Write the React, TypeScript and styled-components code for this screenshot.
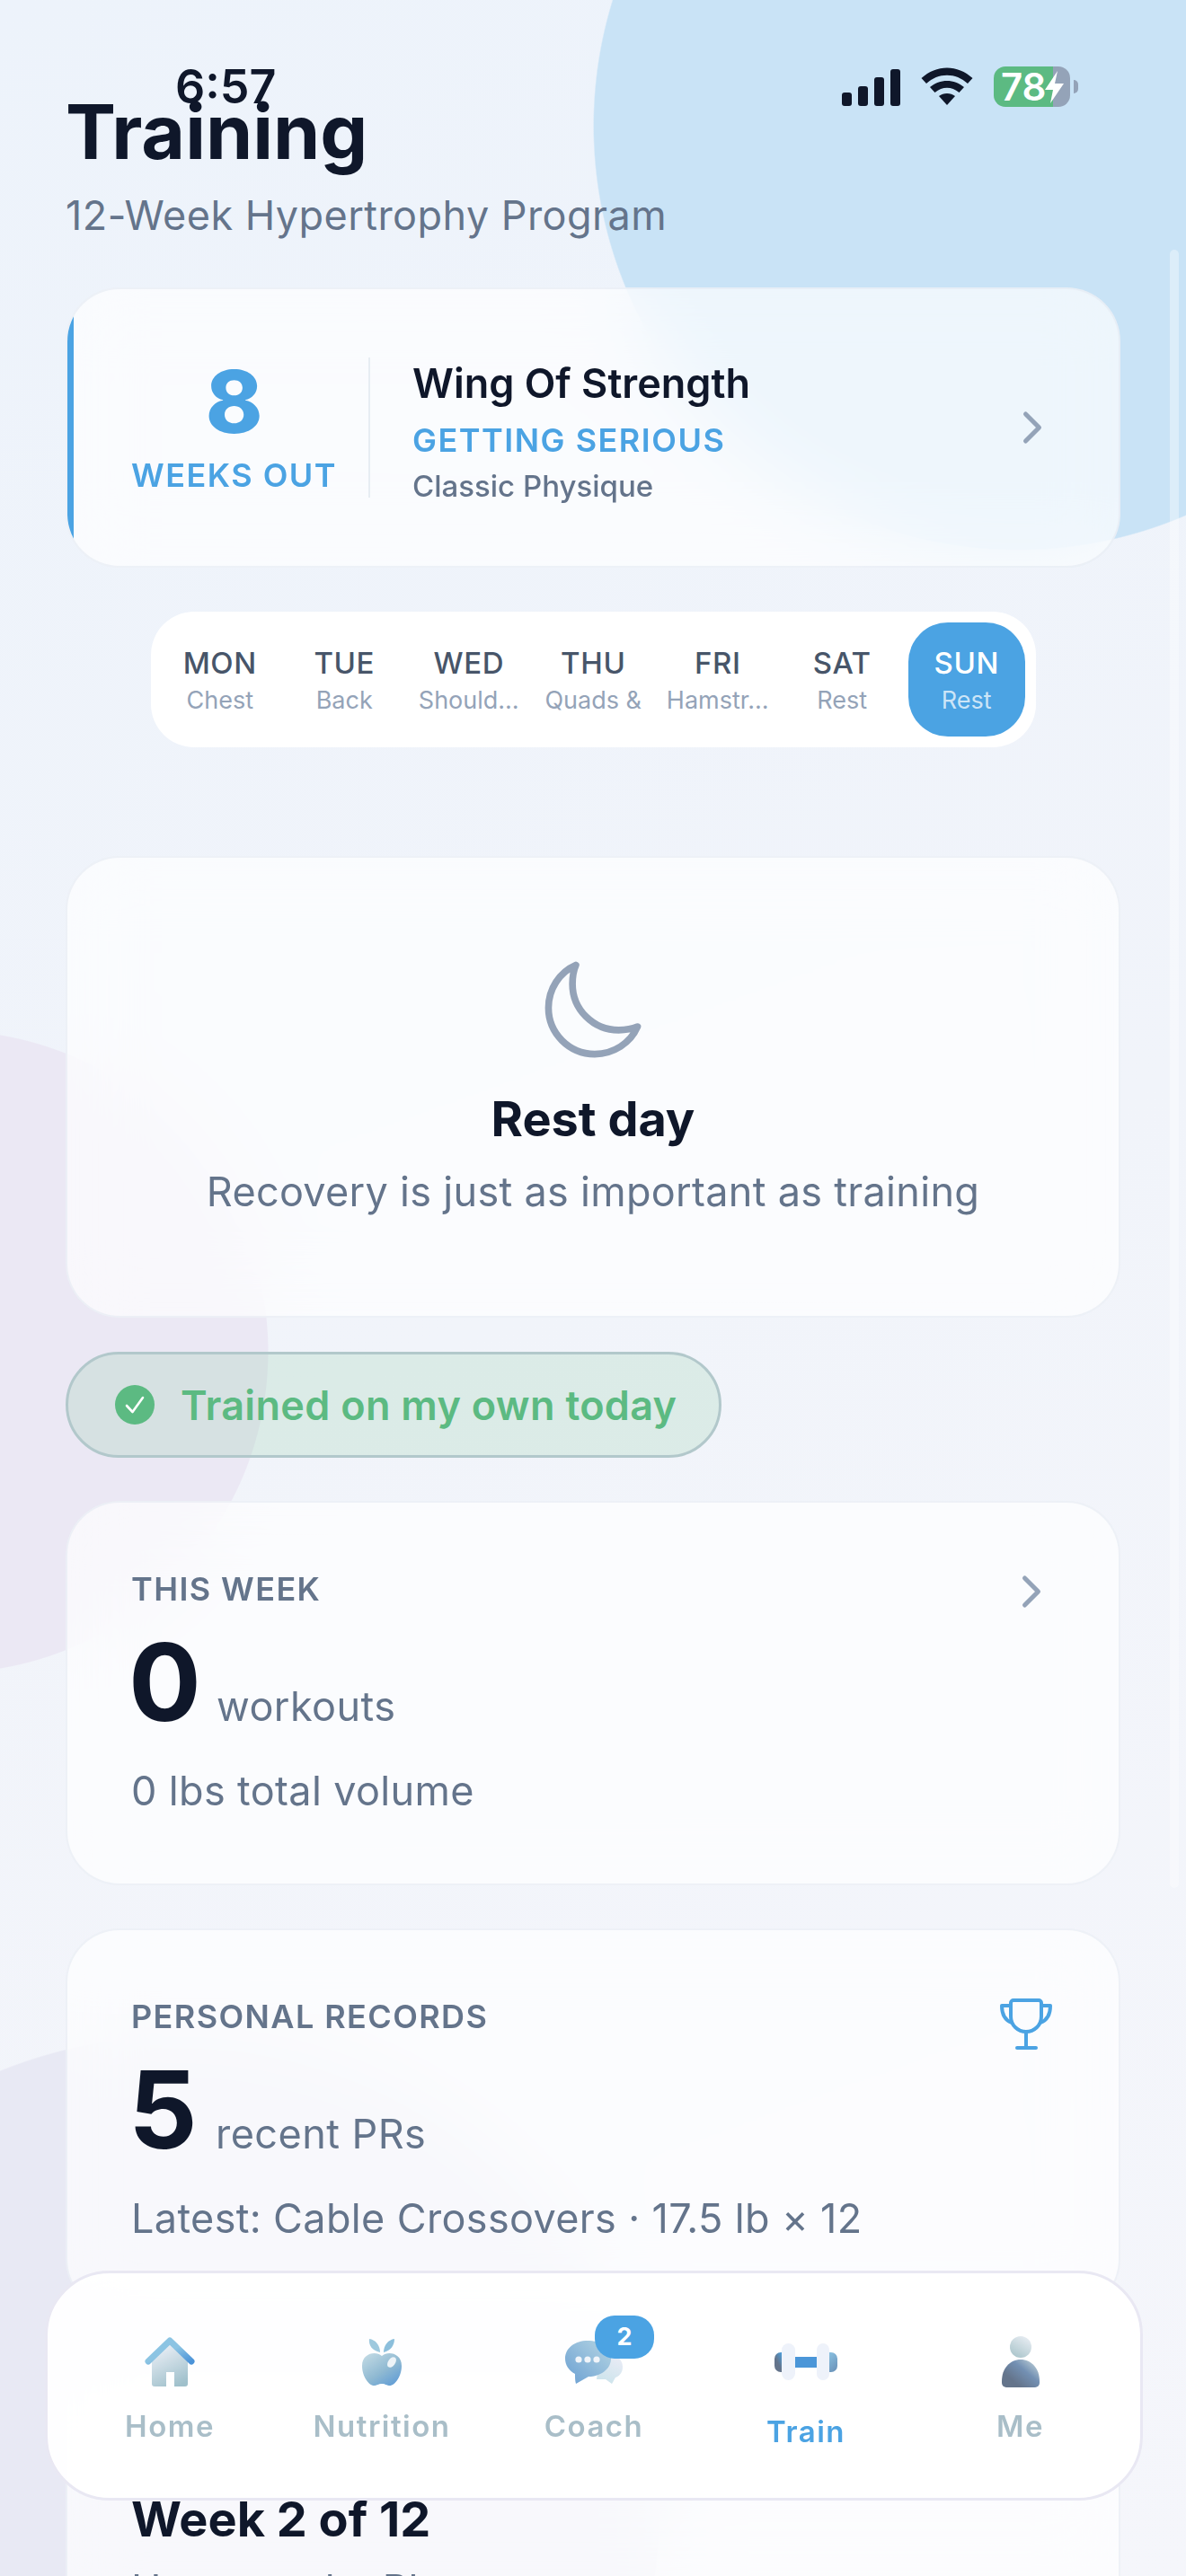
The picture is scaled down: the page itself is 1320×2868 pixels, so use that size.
import React from "react";
import styled, { createGlobalStyle } from "styled-components";
import { ChevronRight } from "lucide-react";
import { IoMoonOutline } from "react-icons/io5";

const GlobalStyle = createGlobalStyle`
  html, body {
    margin: 0;
    padding: 0;
    background: #f1f4fa;
  }
  * {
    box-sizing: border-box;
  }
`;

const Page = styled.div`
  position: relative;
  width: 1320px;
  height: 2868px;
  overflow: hidden;
  padding: 0 73px;
  font-family: Inter, "Liberation Sans", sans-serif;
  color: #0f172a;
  background:
    radial-gradient(circle 473px at 1133px 140px, #c9e3f6 99.7%, transparent 100%),
    radial-gradient(circle 358px at -59px 1505px, #ebe8f4 99.7%, transparent 100%),
    radial-gradient(circle 534px at 200px 2800px, #e8e9f4 99.7%, transparent 100%),
    linear-gradient(160deg, #edf3fb 0%, #f1f4fa 50%, #f5f6fb 100%);
`;

const StatusBar = styled.div`
  position: absolute;
  top: 0;
  left: 0;
  right: 0;
  height: 130px;
  z-index: 3;
`;

const Time = styled.div`
  position: absolute;
  left: 195px;
  top: 67px;
  font-size: 52px;
  font-weight: 600;
  line-height: 60px;
`;

const StatusIcons = styled.div`
  position: absolute;
  left: 937px;
  top: 74px;
  display: flex;
  align-items: center;
  gap: 23px;
`;

const Signal = styled.div`
  display: flex;
  align-items: flex-end;
  gap: 7px;
  height: 43px;
`;

const SignalBar = styled.span<{ $h: number }>`
  display: block;
  width: 11px;
  height: ${(p) => p.$h}px;
  border-radius: 3px;
  background: #0f172a;
`;

const Battery = styled.div`
  position: relative;
  width: 85px;
  height: 45px;
  border-radius: 13px;
  background: linear-gradient(90deg, #5cba82 0 78%, #94a3b8 78% 100%);
  color: #fff;
  display: flex;
  align-items: center;
  padding-left: 8px;
  font-size: 42px;
  font-weight: 600;
  line-height: 45px;
  &::after {
    content: "";
    position: absolute;
    right: -9px;
    top: 15px;
    width: 5px;
    height: 15px;
    border-radius: 0 5px 5px 0;
    background: #94a3b8;
  }
`;

const Bolt = styled.svg`
  margin-left: -2px;
`;

const Scrollbar = styled.div`
  position: absolute;
  left: 1302px;
  top: 278px;
  width: 10px;
  height: 1824px;
  border-radius: 5px;
  background: rgba(255, 255, 255, 0.35);
`;

const Header = styled.header`
  padding-top: 96px;
`;

const Title = styled.h1`
  margin: 0;
  font-size: 84px;
  font-weight: 700;
  line-height: 102px;
`;

const Subtitle = styled.p`
  margin: 15px 0 0;
  font-size: 45px;
  line-height: 54px;
  letter-spacing: 0.45px;
  color: #64748b;
`;

const Card = styled.section`
  border-radius: 60px;
  border: 2px solid rgba(226, 232, 240, 0.55);
  background: rgba(255, 255, 255, 0.68);
  backdrop-filter: blur(40px);
`;

const HeroCard = styled(Card)`
  position: relative;
  overflow: hidden;
  margin-top: 53px;
  height: 312px;
  display: flex;
  align-items: center;
  &::before {
    content: "";
    position: absolute;
    left: -2px;
    top: -2px;
    bottom: -2px;
    width: 9px;
    background: #4ba3e3;
  }
`;

const Countdown = styled.div`
  width: 337px;
  height: 156px;
  padding-left: 36px;
  padding-top: 4px;
  display: flex;
  flex-direction: column;
  align-items: center;
  justify-content: center;
  border-right: 2px solid rgba(226, 232, 240, 0.8);
`;

const CountValue = styled.div`
  font-size: 96px;
  font-weight: 800;
  line-height: 96px;
  color: #4ba3e3;
  margin-top: -6px;
`;

const CountLabel = styled.div`
  font-size: 36px;
  font-weight: 600;
  line-height: 44px;
  letter-spacing: 1.5px;
  color: #4ba3e3;
  margin-top: 12px;
`;

const HeroText = styled.div`
  flex: 1;
  padding: 6px 0 0 47px;
`;

const HeroName = styled.div`
  font-size: 45px;
  font-weight: 600;
  line-height: 58px;
`;

const HeroPhase = styled.div`
  font-size: 36px;
  font-weight: 600;
  line-height: 44px;
  letter-spacing: 1.5px;
  color: #4ba3e3;
  margin-top: 12px;
`;

const HeroSport = styled.div`
  font-size: 33px;
  font-weight: 500;
  line-height: 40px;
  color: #64748b;
  margin-top: 9px;
`;

const Chevron = styled(ChevronRight)`
  color: #94a3b8;
  flex: none;
`;

const HeroChevron = styled(Chevron)`
  margin-right: 66px;
`;

const StatChevron = styled(Chevron)`
  margin: 6px -4px 0 0;
`;

const WeekStrip = styled.nav`
  width: 985px;
  height: 151px;
  margin: 49px auto 0;
  padding: 12px;
  display: grid;
  grid-template-columns: repeat(7, 130.5px);
  gap: 8px;
  border-radius: 48px;
  background: #fff;
`;

const Day = styled.div<{ $active?: boolean }>`
  display: flex;
  flex-direction: column;
  align-items: center;
  justify-content: center;
  border-radius: 44px;
  background: ${(p) => (p.$active ? "#4ba3e3" : "transparent")};
`;

const DayName = styled.span<{ $active?: boolean }>`
  font-size: 33px;
  font-weight: 500;
  line-height: 42px;
  letter-spacing: 0.6px;
  color: ${(p) => (p.$active ? "#fff" : "#475569")};
`;

const DayFocus = styled.span<{ $active?: boolean }>`
  margin-top: 4px;
  font-size: 27px;
  line-height: 34px;
  white-space: nowrap;
  color: ${(p) => (p.$active ? "rgba(255,255,255,.72)" : "#94a3b8")};
`;

const RestCard = styled(Card)`
  margin-top: 121px;
  height: 514px;
  display: flex;
  flex-direction: column;
  align-items: center;
  padding-top: 108px;
`;

const RestTitle = styled.h2`
  margin: 28px 0 0;
  font-size: 54px;
  font-weight: 700;
  line-height: 66px;
`;

const RestText = styled.p`
  margin: 21px 0 0;
  font-size: 45px;
  line-height: 54px;
  letter-spacing: 0.3px;
  color: #64748b;
`;

const TrainedPill = styled.div`
  margin-top: 38px;
  width: 730px;
  height: 118px;
  padding-left: 52px;
  display: flex;
  align-items: center;
  gap: 29px;
  border-radius: 59px;
  border: 3px solid #b2c8cb;
  background: rgba(92, 186, 130, 0.15);
  font-size: 45px;
  font-weight: 600;
  letter-spacing: 0.3px;
  color: #5cba82;
`;

const StatCard = styled(Card)`
  height: 428px;
  margin-top: 48px;
  padding: 74px 71px 0;
`;

const StatTop = styled.div`
  display: flex;
  align-items: center;
  justify-content: space-between;
  height: 44px;
`;

const StatLabel = styled.span`
  font-size: 36px;
  font-weight: 600;
  line-height: 44px;
  letter-spacing: 1.4px;
  color: #64748b;
`;

const StatRow = styled.div`
  display: flex;
  align-items: baseline;
  gap: 17px;
  margin-top: 16px;
`;

const StatValue = styled.span`
  min-width: 80px;
  margin-left: -3px;
  font-size: 120px;
  font-weight: 700;
  line-height: 132px;
`;

const StatUnit = styled.span`
  font-size: 45px;
  letter-spacing: 0.45px;
  color: #64748b;
`;

const StatNote = styled.p`
  margin: 28px 0 0;
  font-size: 45px;
  line-height: 54px;
  letter-spacing: 0.35px;
  color: #64748b;
`;

const Trophy = styled.svg`
  margin: 18px 3px 0 0;
  flex: none;
  fill: none;
  stroke: #4ba3e3;
  stroke-width: 4;
  stroke-linecap: round;
  stroke-linejoin: round;
`;

const ProgramCard = styled(Card)`
  margin-top: 48px;
  height: 400px;
  padding: 147px 71px 0;
`;

const ProgramTitle = styled.div`
  font-size: 54px;
  font-weight: 700;
  line-height: 66px;
`;

const ProgramPhase = styled.div`
  margin-top: 18px;
  font-size: 45px;
  line-height: 54px;
  color: #64748b;
`;

const TabBar = styled.nav`
  position: absolute;
  left: 50px;
  top: 2528px;
  width: 1222px;
  height: 256px;
  padding: 0 18px;
  display: grid;
  grid-template-columns: repeat(5, 1fr);
  border-radius: 72px;
  border: 3px solid #e9e8f3;
  background: rgba(255, 255, 255, 0.92);
  backdrop-filter: blur(40px);
  z-index: 2;
`;

const Tab = styled.div`
  position: relative;
  display: flex;
  flex-direction: column;
  align-items: center;
  padding-top: 68px;
  &:last-child {
    padding-left: 5px;
  }
`;

const TabIcon = styled.div`
  position: relative;
  width: 72px;
  height: 62px;
  display: flex;
  align-items: center;
  justify-content: center;
`;

const TabLabel = styled.span<{ $active?: boolean }>`
  margin-top: ${(p) => (p.$active ? "26px" : "20px")};
  font-size: 33px;
  font-weight: 600;
  line-height: 40px;
  letter-spacing: 1.5px;
  color: ${(p) => (p.$active ? "#4ba3e3" : "#a9bec8")};
`;

const Badge = styled.span`
  position: absolute;
  left: 37px;
  top: -21px;
  width: 66px;
  height: 48px;
  border-radius: 22px;
  background: #4ba3e3;
  color: #fff;
  font-size: 27px;
  font-weight: 700;
  line-height: 48px;
  text-align: center;
`;

const Wifi = () => (
  <svg width="58" height="43" viewBox="0 0 58 43" fill="#0f172a">
    <path d="M0.5 12 C17 -3.5 41 -3.5 57.5 12 L52 18 C39 5.5 19 5.5 6 18 Z" />
    <path d="M10 22 C21 12.5 37 12.5 48 22 L42.5 28 C34 21 24 21 15.5 28 Z" />
    <path d="M20 32 C25 28 33 28 38 32 L29 42 Z" />
  </svg>
);

const HomeIcon = () => (
  <svg width="56" height="56" viewBox="0 0 56 56">
    <defs>
      <linearGradient id="homeBody" x1="0.3" y1="0" x2="0.7" y2="1">
        <stop offset="0" stopColor="#eef1f8" />
        <stop offset="1" stopColor="#9fc0cb" />
      </linearGradient>
      <linearGradient id="homeRoof" x1="0" y1="0" x2="1" y2="1">
        <stop offset="0.5" stopColor="#8cc4e3" />
        <stop offset="1" stopColor="#4b93d8" />
      </linearGradient>
    </defs>
    <path d="M8 25 L28 6 L48 25 V52 a3 3 0 0 1 -3 3 H11 a3 3 0 0 1 -3 -3 Z" fill="url(#homeBody)" />
    <path d="M24 55 V39 h9 V55 Z" fill="#fff" />
    <path d="M4 27 L28 4 L52 27" fill="none" stroke="url(#homeRoof)" strokeWidth="7" strokeLinecap="round" strokeLinejoin="round" />
  </svg>
);

const AppleIcon = () => (
  <svg width="46" height="54" viewBox="0 0 46 54">
    <defs>
      <linearGradient id="appleBody" x1="0.1" y1="0" x2="0.9" y2="1">
        <stop offset="0" stopColor="#c2dae4" />
        <stop offset="0.55" stopColor="#8fb9d2" />
        <stop offset="1" stopColor="#5c9ad6" />
      </linearGradient>
    </defs>
    <path d="M21 16 C12 14 8 8 9 1 C16 2 21 8 21 16 Z" fill="#9ec9de" />
    <path d="M25 16 C33 14 37 8 37 1 C30 2 25 8 25 16 Z" fill="#8cbfdc" />
    <path d="M23 20 C30 14 45 17 45 31 C45 43 37 54 31 53 C27 52 26 51 23 51 C20 51 19 52 15 53 C9 54 1 43 1 31 C1 17 16 14 23 20 Z" fill="url(#appleBody)" />
    <ellipse cx="34" cy="27" rx="4" ry="6.5" transform="rotate(35 34 27)" fill="#eef4f8" />
  </svg>
);

const ChatIcon = () => (
  <svg width="66" height="50" viewBox="0 0 66 50">
    <defs>
      <linearGradient id="chatMain" x1="1" y1="0" x2="0" y2="1">
        <stop offset="0" stopColor="#b6d6e3" />
        <stop offset="1" stopColor="#6a9fd2" />
      </linearGradient>
      <linearGradient id="chatBack" x1="0.8" y1="0" x2="0.4" y2="1">
        <stop offset="0" stopColor="#ebecf6" />
        <stop offset="1" stopColor="#cde4ec" />
      </linearGradient>
    </defs>
    <path d="M40 16 H48 C58 16 65 22 65 30 C65 36 62 40 57 42 L53 49 L46 44 H36 Z" fill="url(#chatBack)" />
    <path d="M26 1 C40 1 52 9 52 21 C52 33 40 41 27 41 L13 49 C12 46 12 42 12 38 C5 34 1 28 1 21 C1 9 12 1 26 1 Z" fill="url(#chatMain)" />
    <circle cx="16" cy="22" r="3.6" fill="#f0f4f9" />
    <circle cx="26" cy="22" r="3.6" fill="#f0f4f9" />
    <circle cx="36" cy="22" r="3.6" fill="#f0f4f9" />
  </svg>
);

const DumbbellIcon = () => (
  <svg width="72" height="42" viewBox="0 0 72 42">
    <defs>
      <linearGradient id="bellLeft" x1="0.8" y1="0" x2="0.3" y2="0.5">
        <stop offset="0" stopColor="#4ba3e3" />
        <stop offset="1" stopColor="#64748b" />
      </linearGradient>
      <linearGradient id="bellRight" x1="0" y1="0" x2="0.5" y2="1">
        <stop offset="0" stopColor="#8cc4e3" />
        <stop offset="1" stopColor="#6e97bd" />
      </linearGradient>
    </defs>
    <path d="M12 10 H8 a7 7 0 0 0 -7 7 v8 a7 7 0 0 0 7 7 h4 Z" fill="url(#bellLeft)" />
    <path d="M60 10 h4 a7 7 0 0 1 7 7 v8 a7 7 0 0 1 -7 7 h-4 Z" fill="url(#bellRight)" />
    <rect x="22" y="15" width="28" height="12" fill="#4b96d8" />
    <rect x="9" y="0" width="15" height="41" rx="7.5" fill="#eef2fa" />
    <rect x="48" y="0" width="14" height="41" rx="7" fill="#eef2fa" />
  </svg>
);

const PersonIcon = () => (
  <svg width="44" height="58" viewBox="0 0 44 58">
    <defs>
      <linearGradient id="personHead" x1="0.8" y1="0" x2="0.2" y2="1">
        <stop offset="0" stopColor="#e8edf3" />
        <stop offset="1" stopColor="#a9c4ca" />
      </linearGradient>
      <linearGradient id="personBody" x1="0" y1="0.8" x2="0.9" y2="0">
        <stop offset="0.2" stopColor="#64748b" />
        <stop offset="0.6" stopColor="#7390b3" />
        <stop offset="1" stopColor="#c2d3d9" />
      </linearGradient>
    </defs>
    <circle cx="22" cy="12" r="12" fill="url(#personHead)" />
    <path d="M22 26 C34 26 43 36 43 50 V52 a5 5 0 0 1 -5 5 H6 a5 5 0 0 1 -5 -5 V50 C1 36 10 26 22 26 Z" fill="url(#personBody)" />
  </svg>
);

const days = [
  { name: "MON", focus: "Chest" },
  { name: "TUE", focus: "Back" },
  { name: "WED", focus: "Should…" },
  { name: "THU", focus: "Quads &" },
  { name: "FRI", focus: "Hamstr…" },
  { name: "SAT", focus: "Rest" },
  { name: "SUN", focus: "Rest", active: true },
];

export default function App() {
  return (
    <Page>
      <GlobalStyle />
      <StatusBar>
        <Time>6:57</Time>
        <StatusIcons>
          <Signal>
            <SignalBar $h={15} />
            <SignalBar $h={22} />
            <SignalBar $h={32} />
            <SignalBar $h={41} />
          </Signal>
          <Wifi />
          <Battery>
            78
            <Bolt width="22" height="36" viewBox="0 0 22 36" fill="#fff">
              <path d="M14 0 L0 21 H9 L6 36 L21 14 H11 Z" />
            </Bolt>
          </Battery>
        </StatusIcons>
      </StatusBar>
      <Scrollbar />

      <Header>
        <Title>Training</Title>
        <Subtitle>12-Week Hypertrophy Program</Subtitle>
      </Header>

      <HeroCard>
        <Countdown>
          <CountValue>8</CountValue>
          <CountLabel>WEEKS OUT</CountLabel>
        </Countdown>
        <HeroText>
          <HeroName>Wing Of Strength</HeroName>
          <HeroPhase>GETTING SERIOUS</HeroPhase>
          <HeroSport>Classic Physique</HeroSport>
        </HeroText>
        <HeroChevron size={60} strokeWidth={2} />
      </HeroCard>

      <WeekStrip>
        {days.map((d) => (
          <Day key={d.name} $active={d.active}>
            <DayName $active={d.active}>{d.name}</DayName>
            <DayFocus $active={d.active}>{d.focus}</DayFocus>
          </Day>
        ))}
      </WeekStrip>

      <RestCard>
        <IoMoonOutline size={122} color="#94a3b8" />
        <RestTitle>Rest day</RestTitle>
        <RestText>Recovery is just as important as training</RestText>
      </RestCard>

      <TrainedPill>
        <svg width="44" height="44" viewBox="0 0 44 44">
          <circle cx="22" cy="22" r="22" fill="#5cba82" />
          <path d="M13 23 L19.5 30 L31 14" fill="none" stroke="#fff" strokeWidth="2.6" strokeLinecap="round" strokeLinejoin="round" />
        </svg>
        Trained on my own today
      </TrainedPill>

      <StatCard>
        <StatTop>
          <StatLabel>THIS WEEK</StatLabel>
          <StatChevron size={60} strokeWidth={2} />
        </StatTop>
        <StatRow>
          <StatValue>0</StatValue>
          <StatUnit>workouts</StatUnit>
        </StatRow>
        <StatNote>0 lbs total volume</StatNote>
      </StatCard>

      <StatCard>
        <StatTop>
          <StatLabel>PERSONAL RECORDS</StatLabel>
          <Trophy width="58" height="58" viewBox="0 0 58 58">
            <path d="M12 5 a3 3 0 0 1 3 -3 H43 a3 3 0 0 1 3 3 V20 C46 30 38 37 29 37 C20 37 12 30 12 20 Z" />
            <path d="M12 8 H2 C2 17 5 24 13 27" />
            <path d="M46 8 H56 C56 17 53 24 45 27" />
            <path d="M29 37 V55" />
            <path d="M19 55 H40" />
          </Trophy>
        </StatTop>
        <StatRow>
          <StatValue>5</StatValue>
          <StatUnit>recent PRs</StatUnit>
        </StatRow>
        <StatNote>Latest: Cable Crossovers · 17.5 lb × 12</StatNote>
      </StatCard>

      <ProgramCard>
        <ProgramTitle>Week 2 of 12</ProgramTitle>
        <ProgramPhase>Hypertrophy Plan</ProgramPhase>
      </ProgramCard>

      <TabBar>
        <Tab>
          <TabIcon><HomeIcon /></TabIcon>
          <TabLabel>Home</TabLabel>
        </Tab>
        <Tab>
          <TabIcon><AppleIcon /></TabIcon>
          <TabLabel>Nutrition</TabLabel>
        </Tab>
        <Tab>
          <TabIcon>
            <ChatIcon />
            <Badge>2</Badge>
          </TabIcon>
          <TabLabel>Coach</TabLabel>
        </Tab>
        <Tab>
          <TabIcon><DumbbellIcon /></TabIcon>
          <TabLabel $active>Train</TabLabel>
        </Tab>
        <Tab>
          <TabIcon><PersonIcon /></TabIcon>
          <TabLabel>Me</TabLabel>
        </Tab>
      </TabBar>
    </Page>
  );
}
